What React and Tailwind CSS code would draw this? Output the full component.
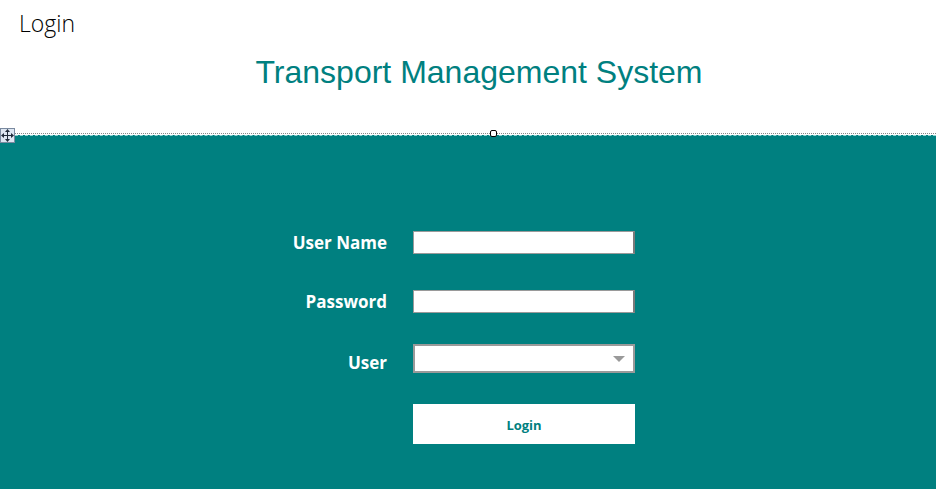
import { useState } from 'react'

function MoveHandle() {
  return (
    <div className="absolute left-0 top-[128px] w-[15px] h-[15px] border border-[#7a8aa0] bg-[#dde6f2] flex items-center justify-center">
      <svg width="13" height="13" viewBox="0 0 13 13" fill="#1f2a3a">
        <rect x="6" y="2" width="1" height="9" />
        <rect x="2" y="6" width="9" height="1" />
        <polygon points="6.5,0 4,3 9,3" />
        <polygon points="6.5,13 4,10 9,10" />
        <polygon points="0,6.5 3,4 3,9" />
        <polygon points="13,6.5 10,4 10,9" />
      </svg>
    </div>
  )
}

function Field({ label, children, className = '', labelClass = '' }) {
  return (
    <div className={`grid grid-cols-[387px_222px] gap-x-[26px] items-center ${className}`}>
      <label className={`text-right text-white font-bold text-[17px] leading-none ${labelClass}`}>{label}</label>
      {children}
    </div>
  )
}

export default function App() {
  const [userName, setUserName] = useState('')
  const [password, setPassword] = useState('')

  return (
    <div className="relative w-[936px] h-[489px] overflow-hidden bg-white font-['Open_Sans','Liberation_Sans',sans-serif]">
      <header className="h-[133px] bg-white">
        <div className="pl-[19px] pt-[8px] text-[23px] font-light text-black leading-[30px] font-['Open_Sans','Lato',sans-serif]">
          Login
        </div>
        <h1 className="mt-[14px] pl-[22px] text-center text-[32px] leading-[40px] text-[#008080] font-['Liberation_Sans',Arial,sans-serif]">
          Transport Management System
        </h1>
      </header>
      <div className="border-t border-dotted border-[#8a8a8a]" />
      <div className="h-px bg-white" />
      <main className="h-[354px] bg-[#008080] border-t border-dashed border-[#8fd4d4] pt-[95px]">
        <Field label="User Name">
          <input
            value={userName}
            onChange={e => setUserName(e.target.value)}
            className="h-[23px] w-[222px] bg-white border border-[#9a9a9a] border-r-2 border-r-[#7a7a7a] px-1 text-sm outline-none"
          />
        </Field>
        <Field label="Password" className="mt-[36px]">
          <input
            type="password"
            value={password}
            onChange={e => setPassword(e.target.value)}
            className="h-[23px] w-[222px] bg-white border border-[#9a9a9a] border-r-2 border-r-[#7a7a7a] px-1 text-sm outline-none"
          />
        </Field>
        <Field label="User" className="mt-[31px]" labelClass="pt-[7px]">
          <div className="relative h-[29px] w-[222px] bg-white border-2 border-[#9a9a9a]">
            <svg className="absolute right-[8px] top-[10px]" width="12" height="6" viewBox="0 0 12 6">
              <polygon points="0,0 12,0 6,6" fill="#9a9a9a" />
            </svg>
          </div>
        </Field>
        <div className="mt-[31px] grid grid-cols-[387px_222px] gap-x-[26px]">
          <div />
          <button className="h-[40px] w-[222px] pt-[4px] bg-white text-[#008080] font-bold text-[13px]">
            Login
          </button>
        </div>
      </main>
      <MoveHandle />
      <div className="absolute left-[490px] top-[130px] w-[7px] h-[7px] bg-white border border-black rounded-[2px]" />
    </div>
  )
}
